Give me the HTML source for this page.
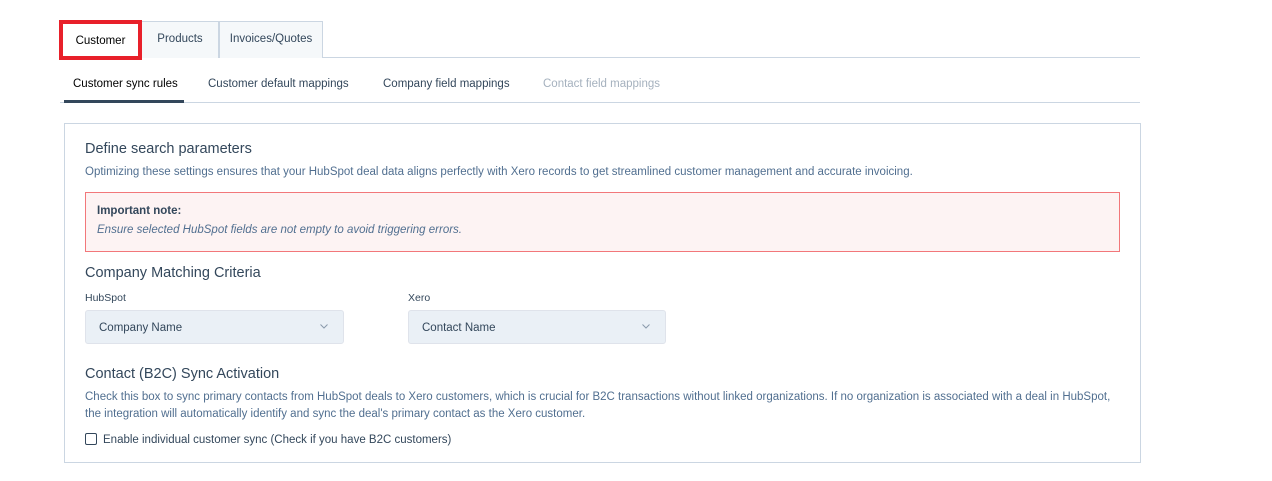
<!DOCTYPE html>
<html><head><style>
*{box-sizing:border-box;margin:0;padding:0}
body{width:1272px;height:481px;background:#fff;font-family:"Liberation Sans",sans-serif;color:#33475b;position:relative;overflow:hidden}
.a{position:absolute;white-space:nowrap}
.tab{position:absolute;top:21px;height:37px;background:#f5f8fa;border:1px solid #cbd6e2;border-bottom:none;font-size:11.5px;text-align:center;line-height:35px}
.sel{position:absolute;top:310px;height:34px;background:#eaf0f6;border:1px solid #dfe3eb;border-radius:3px;font-size:11.5px;line-height:34px;padding-left:13px}
.sel svg{position:absolute;right:15px;top:13px}
.t{font-size:11.5px}
</style></head><body>
<div class="a" style="left:60px;top:57px;width:1080px;height:1px;background:#cbd6e2"></div>
<div class="tab" style="left:141px;width:78px">Products</div>
<div class="tab" style="left:219px;width:104px">Invoices/Quotes</div>
<div class="a" style="left:59px;top:20px;width:83px;height:40px;border:4px solid #e8202a;background:#fff;font-size:11.5px;text-align:center;line-height:34px;color:#000">Customer</div>

<div class="a t" style="left:73px;top:78px;color:#000">Customer sync rules</div>
<div class="a t" style="left:208px;top:78px">Customer default mappings</div>
<div class="a t" style="left:383px;top:78px">Company field mappings</div>
<div class="a t" style="left:543px;top:78px;color:#a5b1be">Contact field mappings</div>
<div class="a" style="left:60px;top:102px;width:1080px;height:1px;background:#cbd6e2"></div>
<div class="a" style="left:64px;top:100px;width:120px;height:3px;background:#33475b"></div>

<div class="a" style="left:64px;top:123px;width:1077px;height:340px;border:1px solid #cbd6e2"></div>
<div class="a" style="left:85px;top:141px;font-size:14.5px">Define search parameters</div>
<div class="a t" style="left:85px;top:166px;color:#516f90">Optimizing these settings ensures that your HubSpot deal data aligns perfectly with Xero records to get streamlined customer management and accurate invoicing.</div>
<div class="a" style="left:85px;top:192px;width:1035px;height:60px;background:#fdf3f3;border:1px solid #f2777a"></div>
<div class="a t" style="left:97px;top:205px;font-weight:bold">Important note:</div>
<div class="a t" style="left:97px;top:224px;font-style:italic;color:#516f90">Ensure selected HubSpot fields are not empty to avoid triggering errors.</div>
<div class="a" style="left:85px;top:265px;font-size:14.5px">Company Matching Criteria</div>
<div class="a" style="left:85px;top:292px;font-size:10.5px">HubSpot</div>
<div class="a" style="left:408px;top:292px;font-size:10.5px">Xero</div>
<div class="sel" style="left:85px;width:259px">Company Name<svg width="8" height="5" viewBox="0 0 8 5"><path d="M0.5 0.5L4 4L7.5 0.5" fill="none" stroke="#8a9aab" stroke-width="1"/></svg></div>
<div class="sel" style="left:408px;width:258px">Contact Name<svg width="8" height="5" viewBox="0 0 8 5"><path d="M0.5 0.5L4 4L7.5 0.5" fill="none" stroke="#8a9aab" stroke-width="1"/></svg></div>
<div class="a" style="left:85px;top:366px;font-size:14.5px">Contact (B2C) Sync Activation</div>
<div class="a t" style="left:85px;top:391px;color:#516f90">Check this box to sync primary contacts from HubSpot deals to Xero customers, which is crucial for B2C transactions without linked organizations. If no organization is associated with a deal in HubSpot,</div>
<div class="a t" style="left:85px;top:408px;color:#516f90">the integration will automatically identify and sync the deal's primary contact as the Xero customer.</div>
<div class="a" style="left:85px;top:433px;width:12px;height:12px;border:1px solid #33475b;border-radius:2px"></div>
<div class="a t" style="left:103px;top:434px">Enable individual customer sync (Check if you have B2C customers)</div>
</body></html>
